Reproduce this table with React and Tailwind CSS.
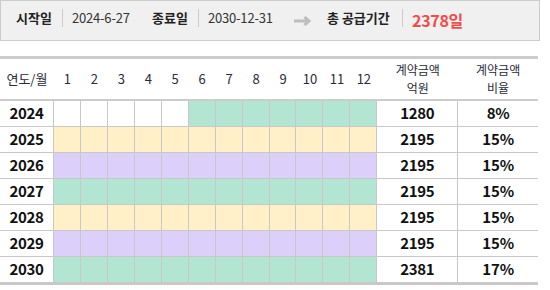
const FONT = { fontFamily: '"Noto Sans CJK KR", "Noto Sans", sans-serif' };

const GREEN = 'bg-[#b3e5d3]';
const YELLOW = 'bg-[#fff0c7]';
const PURPLE = 'bg-[#dcd0fb]';

const months = [1, 2, 3, 4, 5, 6, 7, 8, 9, 10, 11, 12];

const rows = [
  { year: 2024, from: 6, color: GREEN, amount: 1280, ratio: '8%' },
  { year: 2025, from: 1, color: YELLOW, amount: 2195, ratio: '15%' },
  { year: 2026, from: 1, color: PURPLE, amount: 2195, ratio: '15%' },
  { year: 2027, from: 1, color: GREEN, amount: 2195, ratio: '15%' },
  { year: 2028, from: 1, color: YELLOW, amount: 2195, ratio: '15%' },
  { year: 2029, from: 1, color: PURPLE, amount: 2195, ratio: '15%' },
  { year: 2030, from: 1, color: GREEN, amount: 2381, ratio: '17%' },
];

function Sep() {
  return <span className="block w-px h-[18px] bg-[#cccccc] shrink-0" />;
}

function SummaryBar() {
  return (
    <div className="w-[540px] h-[41px] bg-[#f0f0f0] border border-[#cccccc] flex items-center pb-[6px] text-[13px] text-[#222] whitespace-nowrap">
      <span className="ml-[15px] w-[37px] font-bold">시작일</span>
      <span className="ml-[9px]"><Sep /></span>
      <span className="ml-[9px] w-[60px] text-[#333] tracking-[-0.2px]">2024-6-27</span>
      <span className="ml-[20px] w-[37px] font-bold">종료일</span>
      <span className="ml-[9px]"><Sep /></span>
      <span className="ml-[9px] w-[64px] text-[#333] tracking-[-0.2px]">2030-12-31</span>
      <svg className="ml-[22px] mt-[7px] shrink-0" width="18" height="10" viewBox="0 0 18 10">
        <path d="M0 5H14.5M10.5 1L15 5L10.5 9" fill="none" stroke="#bdbdbd" strokeWidth="3" />
      </svg>
      <span className="ml-[15px] w-[63px] font-bold">총 공급기간</span>
      <span className="ml-[12px]"><Sep /></span>
      <span className="ml-[9px] mt-[5px] text-[16px] font-bold text-[#f04c4c] tracking-[-0.3px]">2378일</span>
    </div>
  );
}

function HeaderRow() {
  return (
    <div className="flex h-[42px] border-b-2 border-[#cccccc] text-[13px] text-[#2a2a3a]">
      <div className="w-[54px] flex items-center justify-center">연도/월</div>
      {months.map(m => (
        <div key={m} className="w-[27px] flex items-center justify-center">{m}</div>
      ))}
      <div className="w-[81px] flex flex-col items-center justify-center text-[12px] leading-[18px]">
        <span>계약금액</span>
        <span>억원</span>
      </div>
      <div className="w-[80px] flex flex-col items-center justify-center text-[12px] leading-[18px]">
        <span>계약금액</span>
        <span>비율</span>
      </div>
    </div>
  );
}

function DataRow({ row, last }) {
  return (
    <div className={`flex border-[#c8c8c8] text-[15px] font-bold text-[#111] ${last ? 'border-b-[3px] h-[28px]' : 'border-b h-[26px]'}`}>
      <div className="w-[54px] border-r border-[#c8c8c8] flex items-center justify-center tracking-[-0.4px]">{row.year}</div>
      {months.map(m => (
        <div
          key={m}
          className={`w-[27px] border-r border-[#c8c8c8] ${m >= row.from ? row.color : 'bg-white'}`}
        />
      ))}
      <div className="w-[81px] border-r border-[#c8c8c8] flex items-center justify-center tracking-[-0.4px]">{row.amount}</div>
      <div className="w-[80px] flex items-center justify-center tracking-[-0.2px]">{row.ratio}</div>
    </div>
  );
}

export default function App() {
  return (
    <div className="w-[550px] h-[290px] bg-white overflow-hidden" style={FONT}>
      <SummaryBar />
      <div className="mt-[15px] w-[538px] border-t-[3px] border-[#cccccc]">
        <HeaderRow />
        {rows.map((r, i) => (
          <DataRow key={r.year} row={r} last={i === rows.length - 1} />
        ))}
      </div>
    </div>
  );
}
